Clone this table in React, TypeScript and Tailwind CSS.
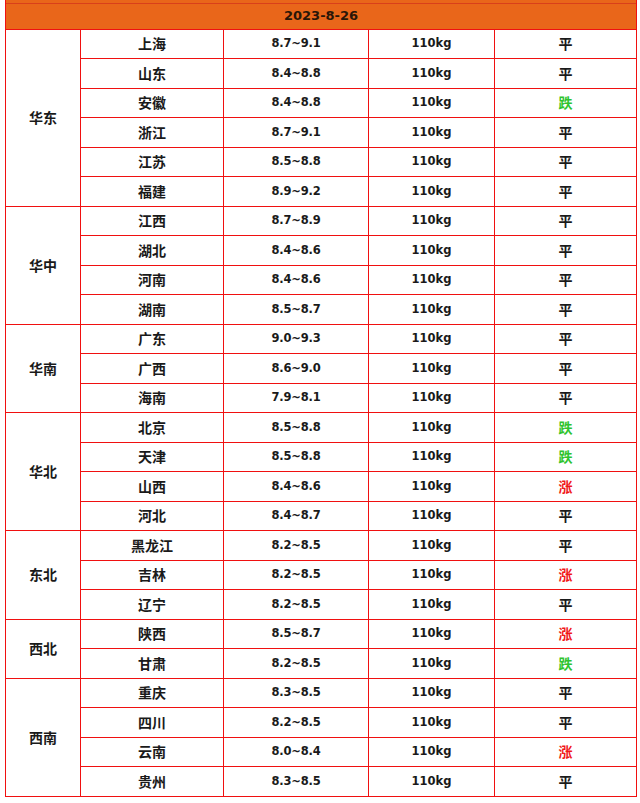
import React from "react";

type Row = { city: string; price: string; trend: "平" | "跌" | "涨" };
type Group = { region: string; rows: Row[] };

const groups: Group[] = [
  {
    region: "华东",
    rows: [
      { city: "上海", price: "8.7~9.1", trend: "平" },
      { city: "山东", price: "8.4~8.8", trend: "平" },
      { city: "安徽", price: "8.4~8.8", trend: "跌" },
      { city: "浙江", price: "8.7~9.1", trend: "平" },
      { city: "江苏", price: "8.5~8.8", trend: "平" },
      { city: "福建", price: "8.9~9.2", trend: "平" },
    ],
  },
  {
    region: "华中",
    rows: [
      { city: "江西", price: "8.7~8.9", trend: "平" },
      { city: "湖北", price: "8.4~8.6", trend: "平" },
      { city: "河南", price: "8.4~8.6", trend: "平" },
      { city: "湖南", price: "8.5~8.7", trend: "平" },
    ],
  },
  {
    region: "华南",
    rows: [
      { city: "广东", price: "9.0~9.3", trend: "平" },
      { city: "广西", price: "8.6~9.0", trend: "平" },
      { city: "海南", price: "7.9~8.1", trend: "平" },
    ],
  },
  {
    region: "华北",
    rows: [
      { city: "北京", price: "8.5~8.8", trend: "跌" },
      { city: "天津", price: "8.5~8.8", trend: "跌" },
      { city: "山西", price: "8.4~8.6", trend: "涨" },
      { city: "河北", price: "8.4~8.7", trend: "平" },
    ],
  },
  {
    region: "东北",
    rows: [
      { city: "黑龙江", price: "8.2~8.5", trend: "平" },
      { city: "吉林", price: "8.2~8.5", trend: "涨" },
      { city: "辽宁", price: "8.2~8.5", trend: "平" },
    ],
  },
  {
    region: "西北",
    rows: [
      { city: "陕西", price: "8.5~8.7", trend: "涨" },
      { city: "甘肃", price: "8.2~8.5", trend: "跌" },
    ],
  },
  {
    region: "西南",
    rows: [
      { city: "重庆", price: "8.3~8.5", trend: "平" },
      { city: "四川", price: "8.2~8.5", trend: "平" },
      { city: "云南", price: "8.0~8.4", trend: "涨" },
      { city: "贵州", price: "8.3~8.5", trend: "平" },
    ],
  },
];

const cjk = "font-['Noto_Sans_CJK_SC',sans-serif]";
const num = "font-['DejaVu_Sans','Noto_Sans_CJK_SC',sans-serif]";

function trendClass(t: Row["trend"]) {
  if (t === "跌") return "text-[#2fc42f]";
  if (t === "涨") return "text-[#f01818]";
  return "text-[#1a1a1a]";
}

export default function App() {
  return (
    <div className="w-[640px] h-[803px] bg-white pl-[5px]">
      <table className="table-fixed border-collapse w-[631px]">
        <colgroup>
          <col className="w-[75px]" />
          <col className="w-[143px]" />
          <col className="w-[145px]" />
          <col className="w-[126px]" />
          <col className="w-[142px]" />
        </colgroup>
        <thead>
          <tr>
            <th
              colSpan={5}
              className="p-0 h-[29px] border border-t-0 border-[#f01010] bg-[#e9661a] align-top"
            >
              <div className="h-[3px] bg-[#e9661a]" />
              <div className="h-px bg-[#d9401a]" />
              <div
                className={`h-[24px] flex items-center justify-center text-[13px] font-bold text-[#2a1608] ${num}`}
              >
                2023-8-26
              </div>
            </th>
          </tr>
        </thead>
        <tbody>
          {groups.map((g) =>
            g.rows.map((r, i) => (
              <tr key={g.region + r.city} className="h-[29.5px]">
                {i === 0 && (
                  <td
                    rowSpan={g.rows.length}
                    className={`p-0 border border-[#f01010] text-center align-middle text-[14px] font-bold text-[#1a1a1a] ${cjk}`}
                  >
                    {g.region}
                  </td>
                )}
                <td
                  className={`p-0 border border-[#f01010] text-center align-middle text-[14px] font-bold text-[#1a1a1a] ${cjk}`}
                >
                  {r.city}
                </td>
                <td
                  className={`p-0 border border-[#f01010] text-center align-middle text-[11.5px] font-bold text-[#1a1a1a] tracking-[-0.2px] ${num}`}
                >
                  {r.price}
                </td>
                <td
                  className={`p-0 border border-[#f01010] text-center align-middle text-[11.5px] font-bold text-[#1a1a1a] ${num}`}
                >
                  110kg
                </td>
                <td
                  className={`p-0 border border-[#f01010] text-center align-middle text-[14px] font-bold ${trendClass(
                    r.trend
                  )} ${cjk}`}
                >
                  {r.trend}
                </td>
              </tr>
            ))
          )}
        </tbody>
      </table>
    </div>
  );
}
